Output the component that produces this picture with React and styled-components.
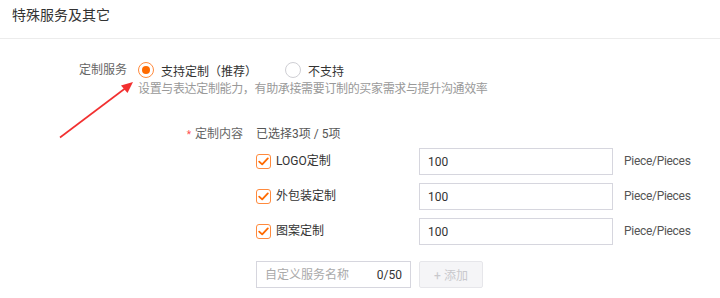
import React, { useState } from "react";
import styled, { createGlobalStyle } from "styled-components";

const GlobalStyle = createGlobalStyle`
    body {
        margin: 0;
        background: #fff;
        font-family: Roboto, "Noto Sans CJK SC", sans-serif;
        color: #333;
    }
`;

const Page = styled.div`
    width: 720px;
    height: 298px;
    position: relative;
    overflow: hidden;
`;

const Header = styled.div`
    box-sizing: border-box;
    height: 39px;
    padding: 7px 12px 0;
    font-size: 14px;
    line-height: 16px;
    color: #333;
    border-bottom: 1px solid #ececec;
`;

const FormRow = styled.div`
    display: flex;
    align-items: flex-start;
    margin-top: ${props => props.top || 0}px;
`;

const Label = styled.div`
    width: ${props => props.width}px;
    flex-shrink: 0;
    text-align: right;
    font-size: 12px;
    line-height: 20px;
    color: #666;
    margin-right: ${props => props.gap || 11}px;
`;

const Star = styled.span`
    color: #ff4d4f;
    margin-right: 4px;
    font-size: 10px;
`;

const Content = styled.div`
    display: flex;
    flex-direction: column;
`;

const RadioGroup = styled.div`
    display: flex;
    align-items: center;
    height: 20px;
`;

const RadioOption = styled.label`
    display: flex;
    align-items: center;
    font-size: 12px;
    color: #333;
    margin-right: 28px;
    cursor: pointer;
`;

const RadioCircle = styled.span`
    box-sizing: border-box;
    width: 16px;
    height: 16px;
    border-radius: 50%;
    border: 1px solid ${props => (props.checked ? "#ff8a3d" : "#cfcfd4")};
    display: flex;
    align-items: center;
    justify-content: center;
    margin-right: 7px;
    &::after {
        content: "";
        width: 8px;
        height: 8px;
        border-radius: 50%;
        background: #ff6a00;
        display: ${props => (props.checked ? "block" : "none")};
    }
`;

const Help = styled.div`
    font-size: 12px;
    line-height: 18px;
    color: #999;
    letter-spacing: -0.35px;
`;

const Count = styled.div`
    font-size: 12px;
    line-height: 20px;
    color: #555;
`;

const ItemRow = styled.div`
    display: flex;
    align-items: center;
    margin-top: ${props => props.top}px;
`;

const CheckItem = styled.label`
    width: 163px;
    display: flex;
    align-items: center;
    font-size: 12px;
    line-height: 15px;
    color: #333;
    cursor: pointer;
`;

const CheckBox = styled.span`
    box-sizing: border-box;
    width: 15px;
    height: 15px;
    border: 1px solid #ff8a3d;
    border-radius: 3px;
    display: flex;
    align-items: center;
    justify-content: center;
    margin-right: 5px;
    background: #fff;
`;

const QtyInput = styled.input`
    box-sizing: border-box;
    width: 194px;
    height: 27px;
    border: 1px solid #d6d6de;
    padding: 0 8px;
    font-size: 12px;
    font-family: Roboto, "Noto Sans CJK SC", sans-serif;
    color: #333;
    outline: none;
`;

const Unit = styled.span`
    margin-left: 11px;
    font-size: 12px;
    line-height: 27px;
    color: #555;
    letter-spacing: -0.3px;
`;

const CustomBox = styled.div`
    box-sizing: border-box;
    width: 155px;
    height: 27px;
    border: 1px solid #d6d6de;
    display: flex;
    align-items: center;
    padding: 0 8px;
    font-size: 12px;
`;

const CustomInput = styled.input`
    flex: 1;
    min-width: 0;
    border: none;
    outline: none;
    padding: 0;
    font-size: 12px;
    font-family: Roboto, "Noto Sans CJK SC", sans-serif;
    color: #333;
    &::placeholder {
        color: #aaa;
    }
`;

const Counter = styled.span`
    color: #333;
`;

const AddButton = styled.button`
    box-sizing: border-box;
    width: 64px;
    height: 27px;
    margin-left: 8px;
    border: 1px solid #e6e6ea;
    border-radius: 2px;
    background: #f5f5f7;
    color: #c8c8cc;
    font-size: 12px;
    font-family: Roboto, "Noto Sans CJK SC", sans-serif;
    cursor: not-allowed;
`;

const Arrow = styled.svg`
    position: absolute;
    left: 0;
    top: 0;
    pointer-events: none;
`;

const Check = () => (
    <svg width="11" height="9" viewBox="0 0 11 9">
        <path d="M1.2 4.6 L4.2 7.4 L9.8 1.4" fill="none" stroke="#ff6a00" strokeWidth="1.8" strokeLinecap="round" strokeLinejoin="round" />
    </svg>
);

const items = [
    { name: "LOGO定制", qty: "100" },
    { name: "外包装定制", qty: "100" },
    { name: "图案定制", qty: "100" },
];

const App = () => {
    const [support, setSupport] = useState(true);
    const [custom, setCustom] = useState("");

    return (
        <Page>
            <GlobalStyle />
            <Header>特殊服务及其它</Header>
            <FormRow top={21}>
                <Label width={127}>定制服务</Label>
                <Content>
                    <RadioGroup>
                        <RadioOption onClick={() => setSupport(true)}>
                            <RadioCircle checked={support} />
                            支持定制（推荐）
                        </RadioOption>
                        <RadioOption onClick={() => setSupport(false)}>
                            <RadioCircle checked={!support} />
                            不支持
                        </RadioOption>
                    </RadioGroup>
                    <Help>设置与表达定制能力，有助承接需要订制的买家需求与提升沟通效率</Help>
                    <FormRow top={26}>
                        <Label width={105} gap={13}><Star>*</Star>定制内容</Label>
                        <Content>
                            <Count>已选择3项 / 5项</Count>
                            {items.map((item, i) => (
                                <ItemRow key={item.name} top={i === 0 ? 4 : 8}>
                                    <CheckItem>
                                        <CheckBox><Check /></CheckBox>
                                        {item.name}
                                    </CheckItem>
                                    <QtyInput defaultValue={item.qty} />
                                    <Unit>Piece/Pieces</Unit>
                                </ItemRow>
                            ))}
                            <ItemRow top={16}>
                                <CustomBox>
                                    <CustomInput
                                        placeholder="自定义服务名称"
                                        value={custom}
                                        onChange={e => setCustom(e.target.value)}
                                    />
                                    <Counter>{custom.length}/50</Counter>
                                </CustomBox>
                                <AddButton disabled>+ 添加</AddButton>
                            </ItemRow>
                        </Content>
                    </FormRow>
                </Content>
            </FormRow>
            <Arrow width="720" height="298">
                <line x1="60" y1="137.5" x2="127" y2="87" stroke="#f23030" strokeWidth="1.6" />
                <polygon points="133,82 121,85.5 127.5,93" fill="#f23030" />
            </Arrow>
        </Page>
    );
};

export default App;
